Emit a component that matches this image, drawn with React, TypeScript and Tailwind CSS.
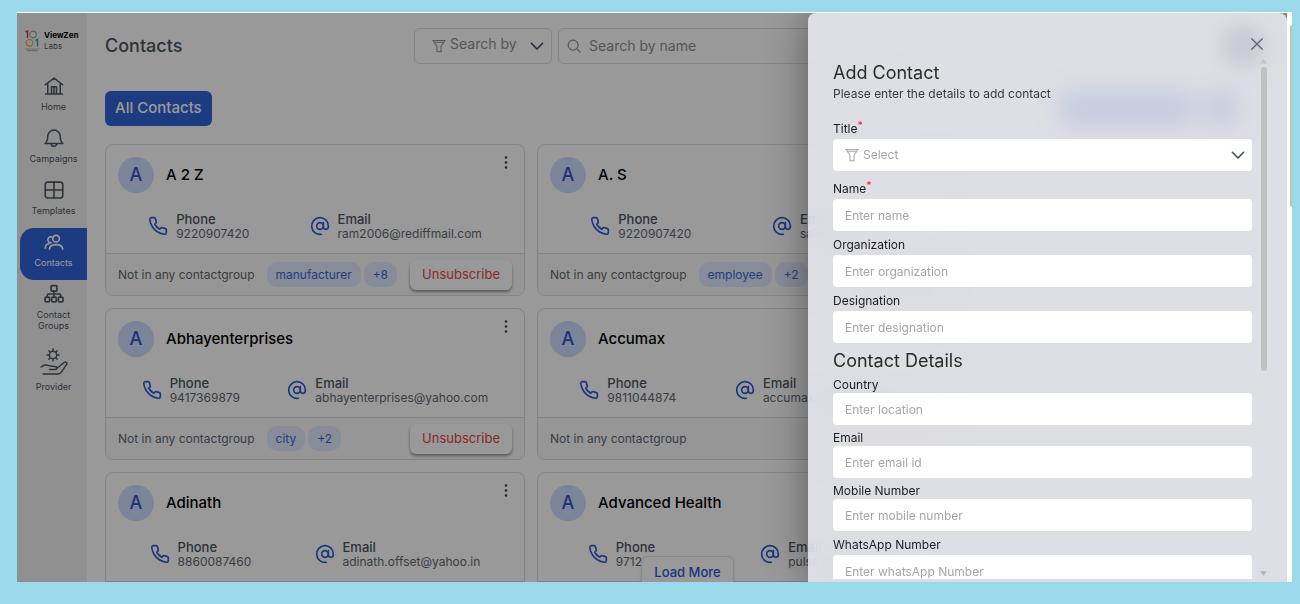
import type { ReactNode } from "react";
import clsx from "clsx";

type Contact = {
  name: string;
  phone: string;
  email: string;
  tags: string[];
};

const CONTACTS: Contact[] = [
  { name: "A 2 Z", phone: "9220907420", email: "ram2006@rediffmail.com", tags: ["manufacturer", "+8"] },
  { name: "A. S", phone: "9220907420", email: "sales@yahoo.com", tags: ["employee", "+2"] },
  { name: "Abhayenterprises", phone: "9417369879", email: "abhayenterprises@yahoo.com", tags: ["city", "+2"] },
  { name: "Accumax", phone: "9811044874", email: "accumax.india@gmail.com", tags: [] },
  { name: "Adinath", phone: "8860087460", email: "adinath.offset@yahoo.in", tags: [] },
  { name: "Advanced Health", phone: "9712904410", email: "pulse.ah@gmail.com", tags: [] },
];

function Icon({
  children,
  className,
  width = 1.5,
}: {
  children: ReactNode;
  className?: string;
  width?: number;
}) {
  return (
    <svg
      viewBox="0 0 24 24"
      fill="none"
      stroke="currentColor"
      strokeWidth={width}
      strokeLinecap="round"
      strokeLinejoin="round"
      className={clsx("shrink-0", className)}
      aria-hidden="true"
    >
      {children}
    </svg>
  );
}

const HomeIcon = () => (
  <Icon className="size-5" width={1.8}>
    <path d="M1.500 10.500 12 2.500l10.500 8M4.500 8.500V21.500h15V8.500M1.800 21.500h20.400M9 21.500v-8.500h6v8.500M12 13v8.500" />
  </Icon>
);

const BellIcon = () => (
  <Icon className="size-5" width={1.8}>
    <path d="M1.500 18.500h21c-2.400-2-3-4-3-8.500a7.500 7.500 0 0 0-15 0c0 4.500-.6 6.500-3 8.500zM8.500 18.500a3.500 3.500 0 0 0 7 0" />
  </Icon>
);

const GridIcon = () => (
  <Icon className="size-5" width={1.9}>
    <rect x="1.500" y="2.500" width="21" height="19" rx="3" />
    <path d="M12 2.500v19M1.500 12h21" />
  </Icon>
);

const PeopleIcon = () => (
  <Icon className="size-5" width={2}>
    <circle cx="14.500" cy="8" r="4" />
    <path d="M6.500 20.500c.3-3.700 3.200-5.300 8-5.300s7.700 1.600 8 5.300M8.500 12.800a3.500 3.500 0 1 1 .8-6.800M1.500 19.500c0-3.200 1.600-5 4.500-5.700" />
  </Icon>
);

const GroupsIcon = () => (
  <Icon className="size-5" width={2}>
    <rect x="8.500" y="2" width="7" height="6.500" rx="1" />
    <rect x="1.200" y="15.800" width="5.600" height="5.600" rx="1.700" />
    <rect x="9.200" y="15.800" width="5.600" height="5.600" rx="1.700" />
    <rect x="17.200" y="15.800" width="5.600" height="5.600" rx="1.700" />
    <path d="M12 8.500v7M4 15.500v-2a1.500 1.500 0 0 1 1.500-1.500h13a1.500 1.500 0 0 1 1.500 1.500v2" />
  </Icon>
);

const ProviderIcon = () => (
  <svg
    viewBox="0 0 28 28"
    fill="none"
    stroke="currentColor"
    strokeWidth="1.400"
    strokeLinecap="round"
    strokeLinejoin="round"
    className="size-7"
    aria-hidden="true"
  >
    <circle cx="13" cy="7" r="3.700" />
    <path d="M13 1v2.300M13 10.700V13M7 7h2.300M16.700 7H19M8.800 2.800l1.600 1.600M15.600 9.600l1.600 1.600M17.200 2.800l-1.600 1.600M10.400 9.600l-1.600 1.600" />
    <path d="M1 19c2.500-2.200 5-2.600 8-1.300 1.500.7 3 .8 6 .8 2.500 0 2.500 3 0 3H9.500M16.800 20.500l7.200-6c1.800-1.300 3.800.3 2.500 2.200l-5.200 7.400c-1 1.400-2 1.900-3.800 1.900H3" />
  </svg>
);

const PhoneIcon = () => (
  <Icon className="size-5 text-[#2a5bd7]" width={2}>
    <path d="M22 16.920v3a2 2 0 0 1-2.180 2 19.790 19.790 0 0 1-8.630-3.070 19.500 19.500 0 0 1-6-6 19.790 19.790 0 0 1-3.070-8.670A2 2 0 0 1 4.110 2h3a2 2 0 0 1 2 1.720c.127.960.361 1.903.7 2.810a2 2 0 0 1-.45 2.110L8.090 9.910a16 16 0 0 0 6 6l1.270-1.270a2 2 0 0 1 2.110-.45c.907.339 1.850.573 2.810.7A2 2 0 0 1 22 16.920z" />
  </Icon>
);

const AtIcon = () => (
  <Icon className="size-5 text-[#2a5bd7]" width={2}>
    <circle cx="12" cy="12" r="4" />
    <path d="M16 8v5a3 3 0 0 0 6 0v-1A10 10 0 1 0 13.500 21.900" />
  </Icon>
);

const FunnelIcon = () => (
  <Icon className="size-3.5" width={1.8}>
    <path d="M1.500 2.500h21L15.500 12v10h-7V12zM5 5.500h14" />
  </Icon>
);

const ChevronIcon = () => (
  <Icon className="pointer-events-none size-4 text-[#3a4656]" width={2.2}>
    <path d="m3.500 8 8.500 8.500L20.500 8" />
  </Icon>
);

function Logo() {
  return (
    <div className="flex items-center gap-1 pl-2 pt-[17px]">
      <svg viewBox="0 0 15 22" fill="none" className="h-[22px] w-[15px]" aria-hidden="true">
        <path d="M.5 2 2.500.9V8" stroke="#e8324a" strokeWidth="1.500" />
        <circle cx="8" cy="4.500" r="3.300" stroke="#6fbf73" strokeWidth="1.200" />
        <circle cx="4.500" cy="12.800" r="3.300" stroke="#f0a030" strokeWidth="1.200" />
        <path d="M10.500 10.500 12.500 9.500v7" stroke="#38a0d8" strokeWidth="1.500" />
        <path d="M0 19h15" stroke="#9cc4b8" />
        <path d="M2 20.700h11" stroke="#e88878" />
      </svg>
      <div className="text-[8px] leading-[11px]">
        <p className="font-bold text-black">ViewZen</p>
        <p className="text-[#555]">Labs</p>
      </div>
    </div>
  );
}

function NavItem({
  icon,
  label,
  active = false,
}: {
  icon: ReactNode;
  label: string;
  active?: boolean;
}) {
  return (
    <a
      href="#"
      className={clsx(
        "ml-[3px] flex min-h-[52px] flex-col items-center gap-1 px-2 pt-1 text-center text-[9px] leading-[11px]",
        active
          ? "rounded-l-[14px] bg-[#3063d8] text-white"
          : "text-[#4a5564]"
      )}
    >
      {icon}
      <span className="pt-px">{label}</span>
    </a>
  );
}

function Sidebar() {
  return (
    <nav className="w-[70px] shrink-0 bg-[#f0f0f0]">
      <Logo />
      <div className="flex flex-col pt-5">
        <NavItem icon={<HomeIcon />} label="Home" />
        <NavItem icon={<BellIcon />} label="Campaigns" />
        <NavItem icon={<GridIcon />} label="Templates" />
        <NavItem icon={<PeopleIcon />} label="Contacts" active />
        <NavItem icon={<GroupsIcon />} label="Contact Groups" />
        <div className="pt-3">
          <NavItem icon={<ProviderIcon />} label="Provider" />
        </div>
      </div>
    </nav>
  );
}

function Channel({
  icon,
  label,
  value,
}: {
  icon: ReactNode;
  label: string;
  value: string;
}) {
  return (
    <div className="flex items-center gap-2">
      {icon}
      <div>
        <p className="text-[13px] font-medium leading-4 text-[#4a5564]">{label}</p>
        <p className="text-xs leading-[14px] text-[#5f6773]">{value}</p>
      </div>
    </div>
  );
}

function ContactCard({ contact }: { contact: Contact }) {
  return (
    <article className="flex h-[152px] w-[420px] shrink-0 flex-col overflow-hidden rounded-lg border border-[#dcdcdc]">
      <div className="flex items-start px-3 pt-3">
        <span className="flex size-9 items-center justify-center rounded-full bg-[#cddcff] text-lg font-medium text-[#2a55c8]">
          {contact.name[0]}
        </span>
        <h2 className="flex-1 pl-3 text-[15px] font-medium leading-9 text-black">
          {contact.name}
        </h2>
        <button type="button" aria-label="More options" className="-mt-1 text-[#3a4656]">
          <svg viewBox="0 0 12 20" fill="currentColor" className="h-5 w-3">
            <circle cx="6" cy="4.500" r="1.300" />
            <circle cx="6" cy="9.500" r="1.300" />
            <circle cx="6" cy="14.500" r="1.300" />
          </svg>
        </button>
      </div>
      <div className="flex flex-1 items-end justify-around px-3 pb-3">
        <Channel icon={<PhoneIcon />} label="Phone" value={contact.phone} />
        <Channel icon={<AtIcon />} label="Email" value={contact.email} />
      </div>
      <div className="flex h-[42px] items-center gap-[3px] border-t border-[#dcdcdc] bg-[#fafafa] px-3">
        <p className="pr-[9px] text-xs text-[#5f6773]">Not in any contactgroup</p>
        {contact.tags.map((tag) => (
          <span
            key={tag}
            className="rounded-[10px] bg-[#dfe9fd] px-[9px] py-1 text-xs leading-[17px] text-[#3b68d9]"
          >
            {tag}
          </span>
        ))}
        <button
          type="button"
          className="ml-auto h-[30px] rounded-md bg-white px-3 text-[13px] text-[#e8453f] shadow-[0_2px_3px_rgba(0,0,0,0.4)]"
        >
          Unsubscribe
        </button>
      </div>
    </article>
  );
}

function ContactsPage() {
  return (
    <main className="flex min-w-0 flex-1 flex-col pl-[18px] pr-[26px] pt-[15px]">
      <header className="flex items-center">
        <h1 className="w-[309px] shrink-0 text-lg font-medium leading-9 text-[#4a5564]">
          Contacts
        </h1>
        <div className="flex h-9 w-[138px] shrink-0 items-center rounded-md border border-[#dcdcdc] pl-[17px] pr-1.5 text-[#8f8f8f]">
          <FunnelIcon />
          <select
            aria-label="Search by"
            className="min-w-0 flex-1 appearance-none bg-transparent pb-1 pl-1 text-sm outline-none"
          >
            <option>Search by</option>
          </select>
          <ChevronIcon />
        </div>
        <label className="ml-1.5 flex h-9 w-[360px] items-center gap-2 rounded-md border border-[#dcdcdc] px-2 text-[#8f8f8f]">
          <Icon className="size-3.5" width={2}>
            <circle cx="10.500" cy="10.500" r="8.500" />
            <path d="m17 17 5.500 5.500" />
          </Icon>
          <input
            type="search"
            aria-label="Search by name"
            placeholder="Search by name"
            className="w-full bg-transparent text-sm outline-none placeholder:text-[#8f8f8f]"
          />
        </label>
        <span className="ml-auto size-9 rounded-full bg-[#14112a]" />
      </header>
      <div className="flex items-center gap-3 pb-[18px] pr-6 pt-[27px]">
        <button
          type="button"
          className="mr-auto h-[35px] rounded-md bg-[#3063d8] px-2.5 text-[15px] font-medium text-white"
        >
          All Contacts
        </button>
        <button type="button" aria-label="Import contacts" className="h-[35px] w-[132px] rounded-md bg-[#3063d8]" />
        <button type="button" aria-label="Add contact" className="h-[35px] w-8 rounded-md bg-[#3063d8]" />
      </div>
      <div className="flex flex-wrap gap-3">
        {CONTACTS.map((contact) => (
          <ContactCard key={contact.name} contact={contact} />
        ))}
      </div>
    </main>
  );
}

function FieldLabel({
  id,
  children,
  required = false,
  compact = false,
}: {
  id: string;
  children: ReactNode;
  required?: boolean;
  compact?: boolean;
}) {
  return (
    <label
      htmlFor={id}
      className={clsx(
        "flex items-end text-xs leading-4 text-[#1c1c24]",
        required && "h-5",
        compact ? "mt-[5px]" : "mb-0.5 mt-1.5"
      )}
    >
      {children}
      {required ? (
        <span className="self-start text-[10px] font-semibold leading-4 text-[#f03030]">*</span>
      ) : null}
    </label>
  );
}

function Field({
  id,
  label,
  placeholder,
  required,
  compact,
}: {
  id: string;
  label: string;
  placeholder: string;
  required?: boolean;
  compact?: boolean;
}) {
  return (
    <>
      <FieldLabel id={id} required={required} compact={compact}>
        {label}
      </FieldLabel>
      <input
        id={id}
        type="text"
        placeholder={placeholder}
        className="block h-8 w-full rounded bg-white px-3 text-xs outline-none placeholder:text-[#a6a6a6]"
      />
    </>
  );
}

function AddContactDrawer() {
  return (
    <aside
      role="dialog"
      aria-labelledby="drawer-title"
      className="absolute inset-y-0 right-0 flex w-[479px] flex-col rounded-t-lg bg-[#eff0f8]/80 pb-[3px] pl-[25px] pr-5 shadow-[0_0_40px_rgba(0,0,0,0.4)] backdrop-blur-md"
    >
      <div className="flex h-[45px] shrink-0 justify-end pr-0.5 pt-[23px]">
        <button type="button" aria-label="Close" className="size-4 text-[#5f6773]">
          <Icon className="size-4" width={2}>
            <path d="m4 4 16 16M20 4 4 20" />
          </Icon>
        </button>
      </div>
      <div className="flex min-h-0 flex-1 gap-2">
        <form className="min-w-0 flex-1 overflow-hidden">
          <h2 id="drawer-title" className="pt-[3px] text-lg leading-6 text-[#2b2b2b]">
            Add Contact
          </h2>
          <p className="pb-[9px] pt-px text-xs leading-4 text-[#3a3a40]">
            Please enter the details to add contact
          </p>
          <FieldLabel id="title" required>
            Title
          </FieldLabel>
          <div className="flex h-8 items-center rounded bg-white pl-3 pr-1.5 text-[#a6a6a6]">
            <FunnelIcon />
            <select
              id="title"
              className="min-w-0 flex-1 appearance-none bg-transparent pl-1 text-xs outline-none"
            >
              <option>Select</option>
            </select>
            <ChevronIcon />
          </div>
          <Field id="name" label="Name" placeholder="Enter name" required />
          <Field id="organization" label="Organization" placeholder="Enter organization" />
          <Field id="designation" label="Designation" placeholder="Enter designation" />
          <h2 className="mt-[7px] text-lg leading-[22px] text-[#2b2b2b]">Contact Details</h2>
          <Field id="country" label="Country" placeholder="Enter location" compact />
          <Field id="email" label="Email" placeholder="Enter email id" compact />
          <Field id="mobile" label="Mobile Number" placeholder="Enter mobile number" compact />
          <Field id="whatsapp" label="WhatsApp Number" placeholder="Enter whatsApp Number" />
        </form>
        <div className="flex w-[7px] flex-col items-center" aria-hidden="true">
          <svg viewBox="0 0 7 9" fill="#c4c4c6" className="h-[9px] w-[7px]">
            <path d="M3.500 1 7 5.500H0z" />
          </svg>
          <div className="h-[304px] w-1.5 rounded-full bg-[#c1c1c1]" />
          <svg viewBox="0 0 7 9" fill="#b8b8ba" className="mt-auto h-[9px] w-[7px]">
            <path d="M3.500 6 0 1h7z" />
          </svg>
        </div>
      </div>
    </aside>
  );
}

export default function App() {
  return (
    <div className="h-screen bg-[#9ad9ea] pb-[22px] pl-[17px] pr-2 pt-3 font-['Inter',sans-serif]">
      <div className="flex h-full border-t border-white bg-white">
        <div className="relative flex min-w-0 flex-1 overflow-hidden">
          <Sidebar />
          <ContactsPage />
          <button
            type="button"
            className="absolute -bottom-2 left-[624px] h-[34px] w-[93px] rounded-md border border-[#e4e4e4] bg-white text-[13px] font-medium text-[#2a5bd7] shadow"
          >
            Load More
          </button>
          <div className="absolute inset-0 bg-black/40" />
          <AddContactDrawer />
        </div>
        <div className="flex w-[5px] justify-end pt-3" aria-hidden="true">
          <div className="h-[182px] w-0.5 rounded-l bg-[#c1c1c1]" />
        </div>
      </div>
    </div>
  );
}
